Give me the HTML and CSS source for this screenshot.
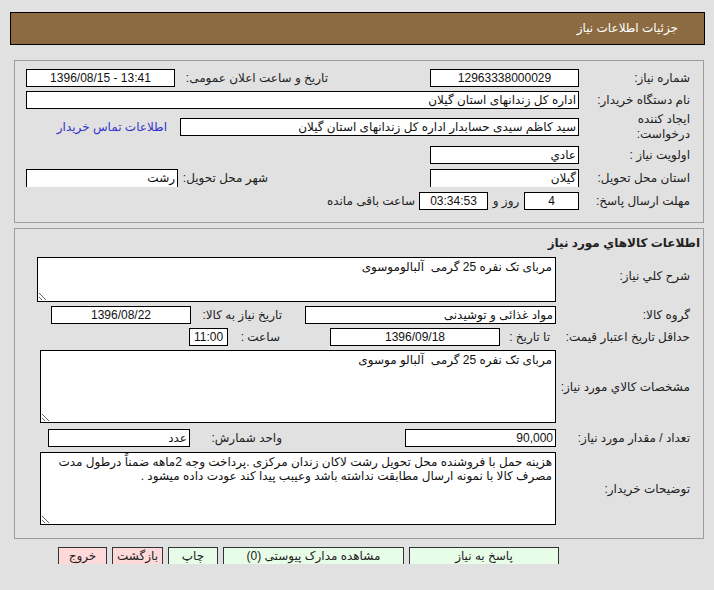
FILE: index.html
```html
<!DOCTYPE html>
<html lang="fa" dir="rtl">
<head>
<meta charset="utf-8">
<title>جزئیات اطلاعات نیاز</title>
<link rel="stylesheet" href="styles.css">
</head>
<body>
<div class="page">
  <div class="header">جزئیات اطلاعات نیاز</div>

  <div class="panel p1">
    <div class="row h22">
      <div class="lbl">شماره نیاز:</div>
      <div class="box w149 c">12963338000029</div>
      <div class="lbl2 pub">تاریخ و ساعت اعلان عمومی:</div>
      <div class="box w149 c ltr">1396/08/15 - 13:41</div>
    </div>
    <div class="row h22">
      <div class="lbl">نام دستگاه خریدار:</div>
      <div class="box w553">اداره کل زندانهای استان گیلان</div>
    </div>
    <div class="row h32">
      <div class="lbl two">ایجاد کننده<br>درخواست:</div>
      <div class="box w399">سید کاظم سیدی حسابدار اداره کل زندانهای استان گیلان</div>
      <a class="link" href="#">اطلاعات تماس خریدار</a>
    </div>
    <div class="row h24">
      <div class="lbl">اولویت نیاز :</div>
      <div class="box w149">عادي</div>
    </div>
    <div class="row h22">
      <div class="lbl">استان محل تحویل:</div>
      <div class="box w149 nob">گیلان</div>
      <div class="lbl2 city">شهر محل تحویل:</div>
      <div class="box w152 nob">رشت</div>
    </div>
    <div class="row h24">
      <div class="lbl">مهلت ارسال پاسخ:</div>
      <div class="box w55 c">4</div>
      <span class="txt days">روز و</span>
      <div class="box w69 c">03:34:53</div>
      <span class="txt rem">ساعت باقی مانده</span>
    </div>
  </div>

  <div class="panel p2">
    <div class="title">اطلاعات کالاهاي مورد نياز</div>
    <div class="row2 first">
      <div class="lbl2c up">شرح کلي نياز:</div>
      <textarea class="ta w519 h45" readonly>مربای تک نفره 25 گرمی  آلبالوموسوی</textarea>
    </div>
    <div class="row2 g4">
      <div class="lbl2c">گروه کالا:</div>
      <div class="box w251">مواد غذائی و توشیدنی</div>
      <div class="lbl2 need">تاریخ نیاز به کالا:</div>
      <div class="box w140 c">1396/08/22</div>
    </div>
    <div class="row2 g4">
      <div class="lbl2c">حداقل تاریخ اعتبار قیمت:</div>
      <span class="txt until">تا تاریخ :</span>
      <div class="box w170 c">1396/09/18</div>
      <span class="txt hour">ساعت :</span>
      <div class="box w39 c">11:00</div>
    </div>
    <div class="row2 g4">
      <div class="lbl2c">مشخصات کالاي مورد نياز:</div>
      <textarea class="ta w516 h73" readonly>مربای تک نفره 25 گرمی  آلبالو موسوی</textarea>
    </div>
    <div class="row2 g6">
      <div class="lbl2c">تعداد / مقدار مورد نیاز:</div>
      <div class="box w151">90,000</div>
      <div class="lbl2 unit">واحد شمارش:</div>
      <div class="box w142">عدد</div>
    </div>
    <div class="row2 g5">
      <div class="lbl2c">توضیحات خریدار:</div>
      <textarea class="ta w516 h73" readonly>هزینه حمل با فروشنده محل تحویل رشت لاکان زندان مرکزی .پرداخت وجه 2ماهه ضمناً درطول مدت مصرف کالا با نمونه ارسال مطابقت نداشته باشد وعیبب پیدا کند عودت داده میشود .</textarea>
    </div>
  </div>

  <div class="buttons">
    <button class="btn green w150">پاسخ به نیاز</button>
    <button class="btn green w181">مشاهده مدارک پیوستی (0)</button>
    <button class="btn green w50">چاپ</button>
    <button class="btn pink w51">بازگشت</button>
    <button class="btn pink w49">خروج</button>
  </div>
</div>
</body>
</html>
```

FILE: styles.css
```css
html, body {
  margin: 0;
  background: #e1e1e1;
}
body {
  font: 12px "Liberation Sans", "DejaVu Sans", sans-serif;
  color: #222;
}
.page {
  padding: 12px 9px 0 10px;
}
.header {
  height: 31px;
  line-height: 31px;
  border: 1px solid #000;
  background: #8c6b42;
  color: #fff;
  padding-right: 26px;
}
.panel {
  border: 1px solid #9c9c9c;
  margin: 0 1px 0 4px;
}
.p1 {
  margin-top: 15px;
  padding: 6px 13px 9px 11px;
}
.p2 {
  margin-top: 5px;
  padding: 4px 3px 13px 0;
}
.row {
  display: flex;
  align-items: center;
}
.h22 { height: 22px; }
.h24 { height: 24px; }
.h32 { height: 32px; }
.lbl {
  width: 111px;
  flex: none;
  white-space: nowrap;
}
.lbl.two {
  line-height: 15px;
}
.lbl2 {
  white-space: nowrap;
  flex: none;
}
.pub { width: 153px; margin-right: 102px; }
.city { width: 88px; margin-right: 162px; margin-left: 2px; }
.box {
  flex: none;
  box-sizing: border-box;
  height: 18px;
  line-height: 16px;
  border: 1px solid #000;
  background: #fff;
  color: #111;
  padding: 0 2px;
  white-space: nowrap;
  overflow: hidden;
}
.box.c { text-align: center; }
.box.ltr { direction: ltr; }
.box.nob { border-bottom: none; }
.w39 { width: 39px; }
.w55 { width: 55px; }
.w69 { width: 69px; }
.w140 { width: 140px; }
.w142 { width: 142px; }
.w149 { width: 149px; }
.w151 { width: 151px; }
.w152 { width: 152px; }
.w170 { width: 170px; }
.w251 { width: 251px; }
.w399 { width: 399px; }
.w553 { width: 553px; }
.link {
  color: #3333cc;
  text-decoration: none;
  margin-right: 13px;
  white-space: nowrap;
}
.txt { white-space: nowrap; flex: none; }
.days { width: 36px; text-align: center; }
.rem { margin-right: 4px; }

.title {
  font-weight: bold;
  line-height: 20px;
  margin-bottom: 4px;
}
.row2 {
  display: flex;
  align-items: center;
  padding-right: 10px;
}
.g4 { margin-top: 4px; }
.g5 { margin-top: 5px; }
.g6 { margin-top: 6px; }
.lbl2c {
  width: 134px;
  flex: none;
  white-space: nowrap;
}
.lbl2c.up { margin-bottom: 8px; }
.need { width: 91px; margin-right: 23px; }
.unit { width: 92px; margin-right: 123px; }
.until { width: 50px; padding-right: 6px; }
.hour { width: 40px; margin-right: 50px; margin-left: 12px; }
.ta {
  flex: none;
  box-sizing: border-box;
  border: 1px solid #000;
  background: #fff;
  color: #111;
  font: 12px "Liberation Sans", "DejaVu Sans", sans-serif;
  line-height: 14px;
  padding: 2px 3px;
  margin: 0;
  overflow: hidden;
  resize: both;
}
.w516 { width: 516px; }
.w519 { width: 519px; }
.h45 { height: 45px; }
.h73 { height: 73px; }

.buttons {
  display: flex;
  gap: 5px;
  margin: 8px 146px 0 0;
  height: 17px;
  overflow: hidden;
}
.btn {
  flex: none;
  box-sizing: border-box;
  height: 18px;
  border: 1px solid #333;
  padding: 0;
  margin: 0;
  font: 12px "Liberation Sans", "DejaVu Sans", sans-serif;
  line-height: 15px;
  color: #222;
  text-align: center;
}
.green { background: #e8fde8; }
.pink { background: #fdd9d9; }
.w49 { width: 49px; }
.w50 { width: 50px; }
.w51 { width: 51px; }
.w150 { width: 150px; }
.w181 { width: 181px; }
```
